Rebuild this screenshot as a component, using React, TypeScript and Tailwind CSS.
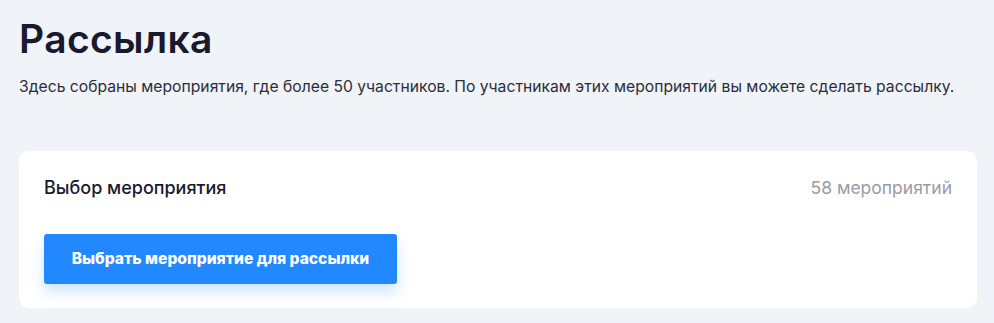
export default function App() {
  return (
    <div className="min-h-[323px] w-full bg-[#f0f4f9] pl-[19px] pr-[17px] pt-[15px] pb-[15px] font-['Inter',sans-serif] text-[#1a1a2e]">
      <h1 className="text-[39px] font-semibold leading-[48px] tracking-[0.35px]">Рассылка</h1>
      <p className="mt-[14px] text-[15.7px] leading-[20px] text-[#2b2d3a]">
        Здесь собраны мероприятия, где более 50 участников. По участникам этих мероприятий вы можете сделать рассылку.
      </p>

      <div className="mt-[54px] rounded-[10px] bg-white pl-[25px] pr-[25px] pt-[25px] pb-[24px]">
        <div className="flex items-center justify-between">
          <span className="text-[18px] font-medium leading-[24px] text-[#1a1a2e]">Выбор мероприятия</span>
          <span className="text-[17.5px] leading-[24px] text-[#9a9ca3]">58 мероприятий</span>
        </div>
        <button className="mt-[34px] h-[50px] w-[353px] rounded-[3px] bg-[#2188ff] text-[15.6px] font-extrabold text-white shadow-[0_8px_14px_rgba(33,136,255,0.22)]">
          Выбрать мероприятие для рассылки
        </button>
      </div>
    </div>
  );
}
